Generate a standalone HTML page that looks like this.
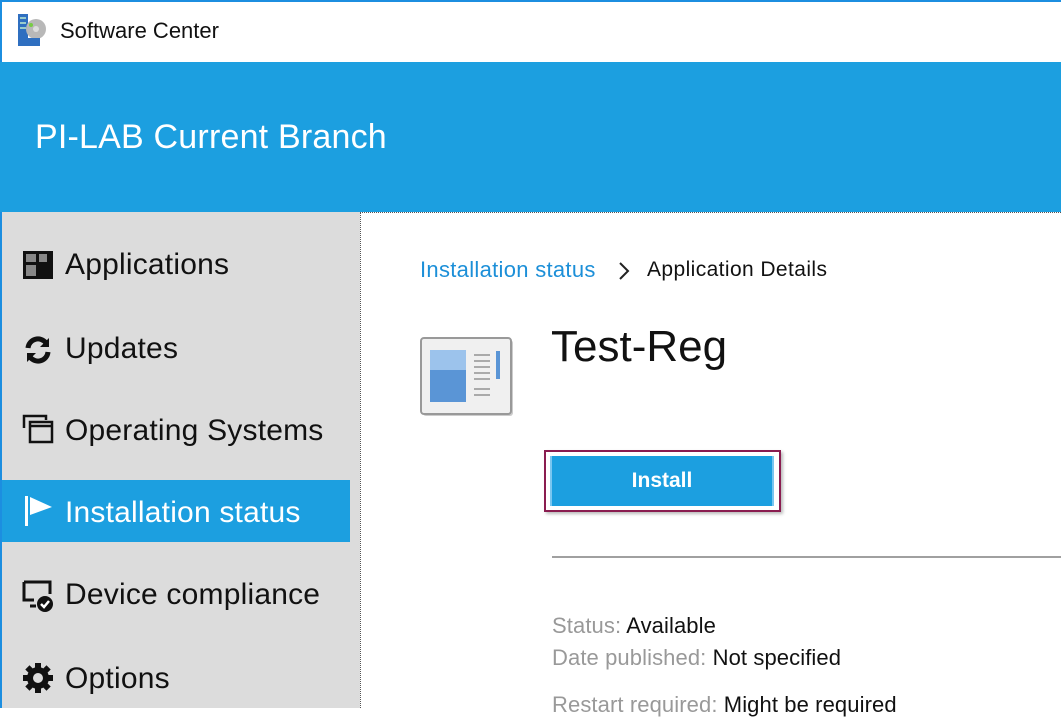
<!DOCTYPE html>
<html><head><style>
*{margin:0;padding:0;box-sizing:border-box}
body{width:1061px;height:708px;overflow:hidden;background:#fff;font-family:"Liberation Sans",sans-serif;position:relative}
.a{position:absolute;white-space:nowrap}
.nav{position:absolute;left:65px;font-size:30px;color:#111;line-height:32px;letter-spacing:0.2px}
.ic{position:absolute;left:22px}
</style></head><body>
<div class="a" style="left:0;top:0;width:2px;height:708px;background:#1c8ee0"></div>
<div class="a" style="left:0;top:0;width:1061px;height:2px;background:#1c8ee0"></div>
<svg class="a" style="left:18px;top:14px" width="32" height="32" viewBox="0 0 32 32"><rect x="0" y="0" width="10" height="32" fill="#2f6fc0"/><rect x="2" y="3" width="6" height="2" fill="#9cc"/><rect x="2" y="8" width="6" height="2" fill="#9cc"/><rect x="2" y="13" width="6" height="2" fill="#9cc"/><circle cx="18" cy="15" r="10" fill="#b8b8b8"/><circle cx="18" cy="15" r="3" fill="#ddd"/><circle cx="13" cy="11" r="2" fill="#7c4"/><rect x="10" y="24" width="12" height="8" fill="#2f6fc0"/></svg>
<div class="a" style="left:60px;top:18px;font-size:22px;color:#111">Software Center</div>
<div class="a" style="left:0;top:62px;width:1061px;height:150px;background:#1c9fe0"></div>
<div class="a" style="left:35px;top:118px;font-size:34px;color:#fff;letter-spacing:0.2px">PI-LAB Current Branch</div>
<div class="a" style="left:2px;top:212px;width:358px;height:496px;background:#dcdcdc"></div>
<div class="a" style="left:360px;top:212px;width:1px;height:496px;border-left:1px dotted #555"></div>
<div class="a" style="left:360px;top:212px;width:701px;height:1px;border-top:1px dotted #555"></div>
<svg class="ic" style="top:250px" width="32" height="30" viewBox="0 0 32 30"><rect x="1" y="1" width="30" height="28" fill="#111"/><rect x="4" y="4" width="10" height="8" fill="#888"/><rect x="17" y="4" width="8" height="8" fill="#888"/><rect x="4" y="15" width="10" height="11" fill="#888"/></svg>
<div class="nav" style="top:249px">Applications</div>
<svg class="ic" style="top:334px" width="32" height="32" viewBox="0 0 32 32" fill="none" stroke="#111" stroke-width="5"><path d="M6 14a10 10 0 0 1 18-5"/><path d="M26 18a10 10 0 0 1-18 5"/><path d="M27 4v9h-9z" fill="#111" stroke="none"/><path d="M5 28v-9h9z" fill="#111" stroke="none"/></svg>
<div class="nav" style="top:333px">Updates</div>
<svg class="ic" style="top:414px" width="32" height="32" viewBox="0 0 32 32" fill="none" stroke="#111" stroke-width="2.5"><path d="M2 14V2h22v4"/><rect x="8" y="8" width="22" height="20"/><path d="M8 12h22"/></svg>
<div class="nav" style="top:415px">Operating Systems</div>
<div class="a" style="left:2px;top:480px;width:348px;height:62px;background:#1c9fe0"></div>
<svg class="ic" style="top:496px" width="32" height="32" viewBox="0 0 32 32"><rect x="3" y="0" width="3" height="30" fill="#fff"/><path d="M8 1L30 11L8 19z" fill="#fff"/></svg>
<div class="nav" style="top:497px;color:#fff">Installation status</div>
<svg class="ic" style="top:580px" width="32" height="32" viewBox="0 0 32 32"><path d="M2 2h26v12M2 2v18h10M8 26h6" fill="none" stroke="#111" stroke-width="3"/><circle cx="23" cy="24" r="8" fill="#111"/><path d="M19 24l3 3 5-6" fill="none" stroke="#fff" stroke-width="2.5"/></svg>
<div class="nav" style="top:579px">Device compliance</div>
<svg class="ic" style="top:662px" width="32" height="32" viewBox="0 0 32 32"><g fill="#111"><circle cx="16" cy="16" r="11"/><rect x="13" y="1" width="6" height="30"/><rect x="1" y="13" width="30" height="6"/><rect x="13" y="1" width="6" height="30" transform="rotate(45 16 16)"/><rect x="13" y="1" width="6" height="30" transform="rotate(-45 16 16)"/></g><circle cx="16" cy="16" r="5" fill="#dcdcdc"/></svg>
<div class="nav" style="top:663px">Options</div>
<div class="a" style="left:420px;top:257px;font-size:22px;color:#1c8fd8;letter-spacing:0.3px">Installation status</div>
<svg class="a" style="left:616px;top:261px" width="14" height="20" viewBox="0 0 14 20"><path d="M4 2l8 8-8 8" fill="none" stroke="#222" stroke-width="2"/></svg>
<div class="a" style="left:647px;top:258px;font-size:21px;color:#111;letter-spacing:0.4px">Application Details</div>
<svg class="a" style="left:420px;top:337px" width="94" height="80" viewBox="0 0 94 80"><rect x="3" y="3" width="90" height="76" rx="3" fill="#ccc"/><rect x="1" y="1" width="90" height="76" rx="3" fill="#f0f0f0" stroke="#999" stroke-width="2"/><rect x="10" y="13" width="36" height="52" fill="#5a95d6"/><rect x="10" y="13" width="36" height="20" fill="#9cc3ec"/><g stroke="#aaa" stroke-width="2"><path d="M54 18h16M54 24h16M54 30h16M54 36h16M54 42h16M54 52h16M54 58h16"/></g><rect x="76" y="14" width="4" height="28" fill="#5a95d6"/></svg>
<div class="a" style="left:551px;top:322px;font-size:44px;color:#111">Test-Reg</div>
<div class="a" style="left:544px;top:450px;width:237px;height:62px;border:2px solid #8a1c50;box-shadow:2px 2px 3px #bbb"></div>
<div class="a" style="left:550px;top:456px;width:224px;height:50px;background:#1c9fe0;border-left:2px solid #7ac6f0;border-right:2px solid #7ac6f0"></div>
<div class="a" style="left:550px;top:469px;width:224px;text-align:center;font-size:21px;font-weight:bold;color:#fff">Install</div>
<div class="a" style="left:552px;top:556px;width:509px;height:2px;background:#a0a0a0"></div>
<div class="a" style="left:552px;top:613px;font-size:22px;color:#999;letter-spacing:0.1px">Status: <span style="color:#111">Available</span></div>
<div class="a" style="left:552px;top:645px;font-size:22px;color:#999;letter-spacing:0.1px">Date published: <span style="color:#111">Not specified</span></div>
<div class="a" style="left:552px;top:692px;font-size:22px;color:#999;letter-spacing:0.1px">Restart required: <span style="color:#111">Might be required</span></div>
</body></html>
